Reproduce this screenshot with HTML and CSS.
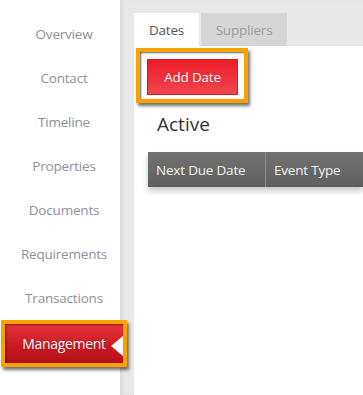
FILE: index.html
```html
<!DOCTYPE html>
<html>
<head>
<meta charset="utf-8">
<link rel="stylesheet" href="styles.css">
</head>
<body>
<div class="app">
  <nav class="sidebar">
    <div class="nav-item">Overview</div>
    <div class="nav-item">Contact</div>
    <div class="nav-item">Timeline</div>
    <div class="nav-item">Properties</div>
    <div class="nav-item">Documents</div>
    <div class="nav-item">Requirements</div>
    <div class="nav-item">Transactions</div>
    <div class="nav-item nav-active">
      <div class="highlight nav-highlight">
        <div class="nav-btn">Management<span class="notch"></span></div>
      </div>
    </div>
  </nav>
  <main class="main">
    <div class="tabs">
      <div class="tab tab-active">Dates</div>
      <div class="tab">Suppliers</div>
    </div>
    <section class="panel">
      <div class="highlight btn-highlight">
        <button class="add-btn">Add Date</button>
      </div>
      <h2 class="section-title">Active</h2>
      <div class="table-head">
        <div class="th th-date">Next Due Date</div>
        <div class="th th-type">Event Type</div>
      </div>
    </section>
  </main>
</div>
</body>
</html>
```
FILE: styles.css
```css
* { box-sizing: border-box; }
html, body { margin: 0; padding: 0; }
body {
  width: 363px;
  height: 395px;
  overflow: hidden;
  font-family: "Open Sans", "Liberation Sans", sans-serif;
  background: #fff;
}
.app {
  display: flex;
  height: 395px;
}
.sidebar {
  width: 120px;
  flex: none;
  background: #fff;
  padding-top: 12px;
  position: relative;
  z-index: 2;
}
.nav-item {
  height: 44px;
  display: flex;
  align-items: center;
  justify-content: center;
  font-size: 13.5px;
  color: #8b919c;
  letter-spacing: -0.2px;
  width: 128px;
}
.nav-active {
  justify-content: flex-start;
  padding-left: 1px;
}
.highlight {
  border: 4px solid #f8a200;
  box-shadow: 2px 3px 3px rgba(0,0,0,0.55), inset 1px 1px 2px rgba(0,0,0,0.6);
}
.nav-highlight {
  width: 126px;
  height: 47px;
  margin-top: 2px;
}
.nav-btn {
  position: relative;
  height: 100%;
  background: linear-gradient(#e8343c, #c91721 60%, #b3101a);
  box-shadow: inset 1px 1px 2px rgba(0,0,0,0.5);
  color: #fff;
  font-size: 14px;
  display: flex;
  align-items: center;
  justify-content: center;
  padding-right: 0;
  text-shadow: 0 0 1px rgba(0,0,0,0.4);
  letter-spacing: -0.3px;
}
.notch {
  position: absolute;
  right: 0;
  top: 12px;
  width: 0;
  height: 0;
  border-top: 10px solid transparent;
  border-bottom: 10px solid transparent;
  border-right: 12px solid #fff;
}
.main {
  flex: 1;
  background: #e8e8e8;
  box-shadow: inset 4px 0 4px -2px rgba(0,0,0,0.08);
  padding: 13px 0 0 14px;
  display: flex;
  flex-direction: column;
}
.tabs {
  display: flex;
  height: 33px;
  gap: 2px;
}
.tab {
  width: 86px;
  background: #d6d6d6;
  color: #9a9a9a;
  font-size: 13.5px;
  display: flex;
  align-items: center;
  justify-content: center;
  letter-spacing: -0.2px;
}
.tab-active {
  width: 65px;
  background: #fff;
  color: #555;
}
.panel {
  flex: 1;
  background: #fff;
  padding-top: 2px;
}
.btn-highlight {
  width: 112px;
  height: 55px;
  margin-left: 2px;
  padding: 7px 6px 4px 7px;
}
.add-btn {
  display: block;
  width: 91px;
  height: 36px;
  border: 1px solid #d81822;
  background: linear-gradient(#ed1c28, #f24550);
  color: #fff;
  font-family: inherit;
  font-size: 13.5px;
  letter-spacing: -0.2px;
  padding: 0;
  text-shadow: 0 0 1px rgba(0,0,0,0.3);
}
.section-title {
  margin: 8px 0 0 23px;
  font-weight: normal;
  font-size: 19px;
  color: #333;
  line-height: 26px;
}
.table-head {
  margin: 15px 0 0 14px;
  height: 35px;
  display: flex;
  background: linear-gradient(#727272, #5e5e5e);
  box-shadow: 0 4px 6px rgba(0,0,0,0.22);
  color: #f2f2f2;
  font-size: 13.5px;
  letter-spacing: -0.2px;
}
.th {
  display: flex;
  align-items: center;
  padding-left: 8px;
}
.th-date {
  width: 118px;
  border-right: 1px solid #8a8a8a;
}
.th-type { flex: 1; }
```
